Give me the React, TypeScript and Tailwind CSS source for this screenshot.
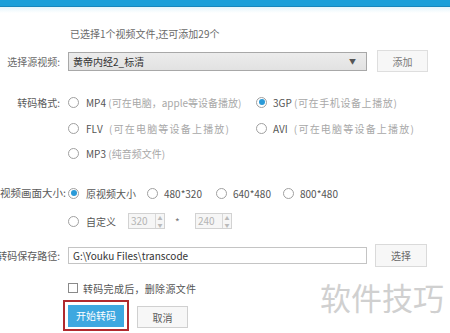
import React from "react";

const Radio = ({ on = false }: { on?: boolean }) => (
  <span className="w-[11px] h-[11px] rounded-full border border-[#a0a0a0] bg-white flex items-center justify-center shrink-0">
    {on && <span className="w-[6px] h-[6px] rounded-full bg-[#2a9ad8]" />}
  </span>
);

const Spin = ({ v }: { v: string }) => (
  <div className="w-[37px] h-[16px] border border-[#d2d2d2] bg-[#f6f6f6] flex items-stretch">
    <span className="flex-1 pl-[2px] text-[#b4b4b4] leading-[14px]">{v}</span>
    <span className="w-[9px] border-l border-[#d8d8d8] flex flex-col items-center justify-center gap-[2px] text-[#bbb]">
      <span className="text-[5px] leading-[5px]">▲</span>
      <span className="text-[5px] leading-[5px]">▼</span>
    </span>
  </div>
);

const App = () => {
  return (
    <div className="w-[450px] h-[333px] bg-white relative overflow-hidden text-[10px] text-[#555] font-['Noto_Sans_CJK_SC',sans-serif]">
      <div className="h-[7px] bg-[#1b9fd9] border-b border-[#1787bc]" />
      <div className="h-[6px] bg-gradient-to-b from-[#e4f5fb] to-white" />

      <div className="mt-[13px] h-[14px] flex items-center pl-[70px] text-[#6a6a6a]">
        已选择1个视频文件,还可添加29个
      </div>

      {/* source video */}
      <div className="mt-[10px] h-[22px] flex items-center">
        <span className="w-[60px] text-right text-[#6a6a6a] whitespace-nowrap">选择源视频:</span>
        <div className="ml-[8px] w-[299px] h-[19px] border border-[#a8a8a8] bg-gradient-to-b from-[#ececec] to-[#e2e2e2] flex items-center pl-[4px] pr-[10px]">
          <span className="flex-1 text-[#333]">黄帝内经2_标清</span>
          <span className="text-[7px] text-[#555]">▼</span>
        </div>
        <div className="ml-[10px] w-[51px] h-[22px] border border-[#dedede] bg-[#f7f7f7] flex items-center justify-center text-[#7a7a7a]">
          添加
        </div>
      </div>

      {/* format */}
      <div className="mt-[20px] h-[20px] flex items-center">
        <span className="w-[60px] text-right text-[#5a5a5a] whitespace-nowrap">转码格式:</span>
        <div className="ml-[8px] w-[188px] flex items-center gap-[7px]">
          <Radio />
          <span className="whitespace-nowrap">MP4 <span className="text-[#a8a8a8]">(可在电脑，apple等设备播放)</span></span>
        </div>
        <div className="flex items-center gap-[6px]">
          <Radio on />
          <span className="whitespace-nowrap">3GP <span className="text-[#a8a8a8] tracking-[0.6px]">(可在手机设备上播放)</span></span>
        </div>
      </div>
      <div className="mt-[6px] h-[20px] flex items-center">
        <div className="ml-[68px] w-[188px] flex items-center gap-[7px]">
          <Radio />
          <span className="whitespace-nowrap">FLV <span className="ml-[4px] text-[#a8a8a8] tracking-[1.2px]">(可在电脑等设备上播放)</span></span>
        </div>
        <div className="flex items-center gap-[6px]">
          <Radio />
          <span className="whitespace-nowrap">AVI <span className="ml-[4px] text-[#a8a8a8] tracking-[1.2px]">(可在电脑等设备上播放)</span></span>
        </div>
      </div>
      <div className="mt-[5px] h-[20px] flex items-center">
        <div className="ml-[68px] flex items-center gap-[7px]">
          <Radio />
          <span className="whitespace-nowrap">MP3 <span className="text-[#a8a8a8]">(纯音频文件)</span></span>
        </div>
      </div>

      {/* size */}
      <div className="mt-[20px] h-[20px] flex items-center">
        <span className="w-[70px] ml-[-4px] text-right text-[10.5px] text-[#5a5a5a] whitespace-nowrap">视频画面大小:</span>
        <div className="ml-[2px] w-[79px] flex items-center gap-[7px]">
          <Radio on />
          <span>原视频大小</span>
        </div>
        <div className="w-[69px] flex items-center gap-[6px]">
          <Radio />
          <span>480*320</span>
        </div>
        <div className="w-[67px] flex items-center gap-[6px]">
          <Radio />
          <span>640*480</span>
        </div>
        <div className="flex items-center gap-[6px]">
          <Radio />
          <span>800*480</span>
        </div>
      </div>
      <div className="mt-[8px] h-[20px] flex items-center">
        <div className="ml-[68px] w-[60px] flex items-center gap-[7px]">
          <Radio />
          <span>自定义</span>
        </div>
        <Spin v="320" />
        <span className="ml-[10px] w-[20px] text-[#777]">*</span>
        <Spin v="240" />
      </div>

      {/* path */}
      <div className="mt-[12px] h-[24px] flex items-center">
        <span className="w-[63px] ml-[-3px] text-right text-[#5a5a5a] whitespace-nowrap">转码保存路径:</span>
        <div className="ml-[8px] w-[299px] h-[17px] border border-[#c4c4c4] bg-white flex items-center pl-[4px] text-[#333]">
          G:\Youku Files\transcode
        </div>
        <div className="ml-[8px] w-[52px] h-[23px] border border-[#dadada] bg-[#f7f7f7] flex items-center justify-center text-[#6a6a6a]">
          选择
        </div>
      </div>

      {/* delete source */}
      <div className="mt-[13px] h-[16px] flex items-center pl-[68px] gap-[5px]">
        <span className="w-[10px] h-[10px] border border-[#8a8a8a] bg-white" />
        <span className="tracking-[0.3px]">转码完成后，删除源文件</span>
      </div>

      {/* actions */}
      <div className="mt-[4px] flex items-start">
        <div className="ml-[63px] w-[66px] h-[31px] border-2 border-[#b02a2e] flex items-center justify-center">
          <div className="w-[56px] h-[22px] bg-[#3ea8e0] text-white flex items-center justify-center">开始转码</div>
        </div>
        <div className="ml-[8px] mt-[6px] w-[51px] h-[22px] border border-[#d0d0d0] bg-[#f7f7f7] flex items-center justify-center text-[#5a5a5a]">
          取消
        </div>
      </div>

      <div className="absolute left-[320px] top-[280px] text-[31px] leading-[34px] text-[#d0d0d0] whitespace-nowrap">
        软件技巧
      </div>
    </div>
  );
};

export default App;
